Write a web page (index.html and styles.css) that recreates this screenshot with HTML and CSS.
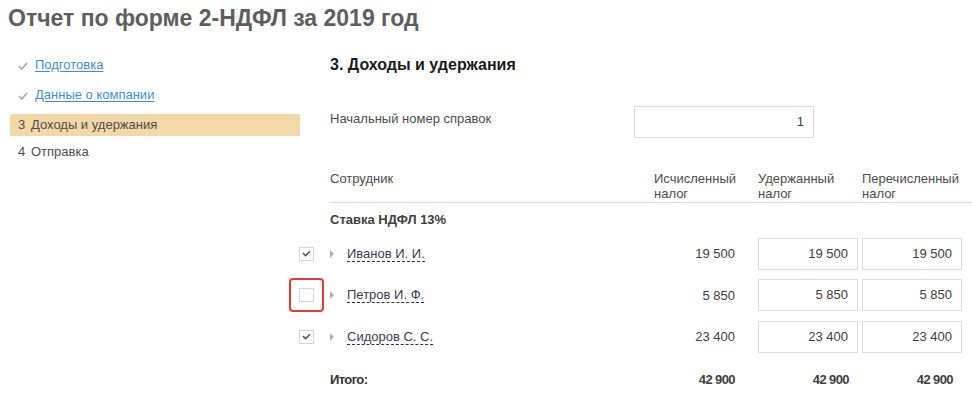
FILE: index.html
```html
<!DOCTYPE html>
<html lang="ru">
<head>
<meta charset="utf-8">
<link rel="stylesheet" href="styles.css">
</head>
<body>
<h1 class="title">Отчет по форме 2-НДФЛ за 2019 год</h1>
<div class="layout">
  <nav class="steps">
    <div class="step done"><span class="tick"><svg width="10" height="8" viewBox="0 0 10 8"><path d="M1 4.2 L3.8 7 L9 1" fill="none" stroke="#a6a6a6" stroke-width="1.6"/></svg></span><a href="#">Подготовка</a></div>
    <div class="step done"><span class="tick"><svg width="10" height="8" viewBox="0 0 10 8"><path d="M1 4.2 L3.8 7 L9 1" fill="none" stroke="#a6a6a6" stroke-width="1.6"/></svg></span><a href="#">Данные о компании</a></div>
    <div class="step active"><span class="num">3</span>Доходы и удержания</div>
    <div class="step last"><span class="num">4</span>Отправка</div>
  </nav>
  <main class="main">
    <h2 class="heading">3. Доходы и удержания</h2>
    <div class="start-row">
      <span class="start-label">Начальный номер справок</span>
      <div class="field start-field">1</div>
    </div>
    <div class="table">
      <div class="thead">
        <div class="h-name">Сотрудник</div>
        <div class="c-calc">Исчисленный<br>налог</div>
        <div class="c-held">Удержанный<br>налог</div>
        <div class="c-paid">Перечисленный<br>налог</div>
      </div>
      <div class="group">Ставка НДФЛ 13%</div>
      <div class="row">
        <div class="chk-wrap"><span class="chk checked"><svg width="9" height="7" viewBox="0 0 9 7"><path d="M1 3.2 L3.6 5.6 L8 1.2" fill="none" stroke="#555" stroke-width="1.6"/></svg></span></div>
        <div class="c-name"><span class="tri"></span><span class="emp">Иванов И. И.</span></div>
        <div class="c-calc num-val">19 500</div>
        <div class="c-held"><div class="field">19 500</div></div>
        <div class="c-paid"><div class="field">19 500</div></div>
      </div>
      <div class="row">
        <div class="chk-wrap focus"><span class="chk"></span></div>
        <div class="c-name"><span class="tri"></span><span class="emp">Петров И. Ф.</span></div>
        <div class="c-calc num-val">5 850</div>
        <div class="c-held"><div class="field">5 850</div></div>
        <div class="c-paid"><div class="field">5 850</div></div>
      </div>
      <div class="row">
        <div class="chk-wrap"><span class="chk checked"><svg width="9" height="7" viewBox="0 0 9 7"><path d="M1 3.2 L3.6 5.6 L8 1.2" fill="none" stroke="#555" stroke-width="1.6"/></svg></span></div>
        <div class="c-name"><span class="tri"></span><span class="emp">Сидоров С. С.</span></div>
        <div class="c-calc num-val">23 400</div>
        <div class="c-held"><div class="field">23 400</div></div>
        <div class="c-paid"><div class="field">23 400</div></div>
      </div>
      <div class="total">
        <div class="t-name">Итого:</div>
        <div class="c-calc num-val">42 900</div>
        <div class="c-held num-val pad">42 900</div>
        <div class="c-paid num-val pad">42 900</div>
      </div>
    </div>
  </main>
</div>
</body>
</html>
```

FILE: styles.css
```css
* { box-sizing: border-box; }
html, body { margin: 0; padding: 0; background: #fff; }
body {
  font-family: "Liberation Sans", Arial, sans-serif;
  font-size: 13px;
  color: #4d4d4d;
  width: 972px;
  height: 404px;
  overflow: hidden;
}
.title {
  margin: 0;
  padding: 5px 0 0 8px;
  font-size: 23px;
  font-weight: bold;
  color: #5e5e5e;
  line-height: 26px;
  height: 54px;
}
.layout {
  display: flex;
  gap: 30px;
}
.steps {
  width: 300px;
  padding-left: 10px;
  display: flex;
  flex-direction: column;
  gap: 8px;
}
.step {
  height: 22px;
  line-height: 22px;
  display: flex;
  align-items: center;
  padding-left: 8px;
  color: #4d4d4d;
  border-radius: 2px;
}
.step a {
  color: #3d8fd9;
  text-decoration: underline;
  text-underline-offset: 2px;
}
.tick { width: 17px; display: inline-flex; align-items: center; padding-top: 1px; }
.num { width: 13px; }
.step.active { background: #f1d8a6; }
.step.last { margin-top: -3px; }
.main { flex: 1; }
.heading {
  margin: 0;
  height: 22px;
  line-height: 22px;
  font-size: 16px;
  font-weight: bold;
  color: #1a1a1a;
}
.start-row {
  margin-top: 30px;
  display: flex;
  align-items: flex-start;
  height: 31px;
}
.start-label { width: 304px; line-height: 26px; }
.field {
  height: 32px;
  border: 1px solid #dcdcdc;
  text-align: right;
  line-height: 30px;
  padding-right: 9px;
  color: #404040;
}
.start-field { width: 180px; height: 32px; }
.table { margin-top: 30px; }
.thead, .row, .total {
  display: grid;
  grid-template-columns: 324px 104px 104px 104px;
  padding-right: 6px;
}
.thead {
  border-bottom: 1px solid #dcdcdc;
  height: 36px;
  line-height: 15px;
  padding-top: 4px;
  align-items: start;
}
.group {
  font-weight: bold;
  color: #404040;
  height: 30px;
  line-height: 34px;
}
.row {
  position: relative;
  height: 41.5px;
  align-items: center;
}
.c-held, .c-paid { padding-right: 4px; }
.chk-wrap {
  position: absolute;
  left: -41px;
  top: 50%;
  transform: translateY(-50%);
  width: 35px;
  height: 34px;
  display: flex;
  align-items: center;
  justify-content: center;
  border: 2px solid transparent;
  border-radius: 4px;
}
.chk-wrap.focus { border-color: #e53a35; }
.chk {
  width: 15px;
  height: 14px;
  border: 1px solid #d6d6d6;
  display: flex;
  align-items: center;
  justify-content: center;
  background: #fff;
}
.c-name { display: flex; align-items: center; }
.tri {
  width: 0;
  height: 0;
  border-top: 4px solid transparent;
  border-bottom: 4px solid transparent;
  border-left: 4px solid #b0b0b0;
  margin-right: 13px;
}
.emp {
  color: #3e3a57;
  border-bottom: 1px dashed #333;
  line-height: 15px;
}
.num-val { text-align: right; padding-right: 23px; color: #404040; }
.total {
  height: 44px;
  align-items: center;
  font-weight: bold;
  color: #333;
  letter-spacing: -0.6px;
}
.total .pad { padding-right: 13px; }
.total .c-calc { padding-right: 23px; }
```
